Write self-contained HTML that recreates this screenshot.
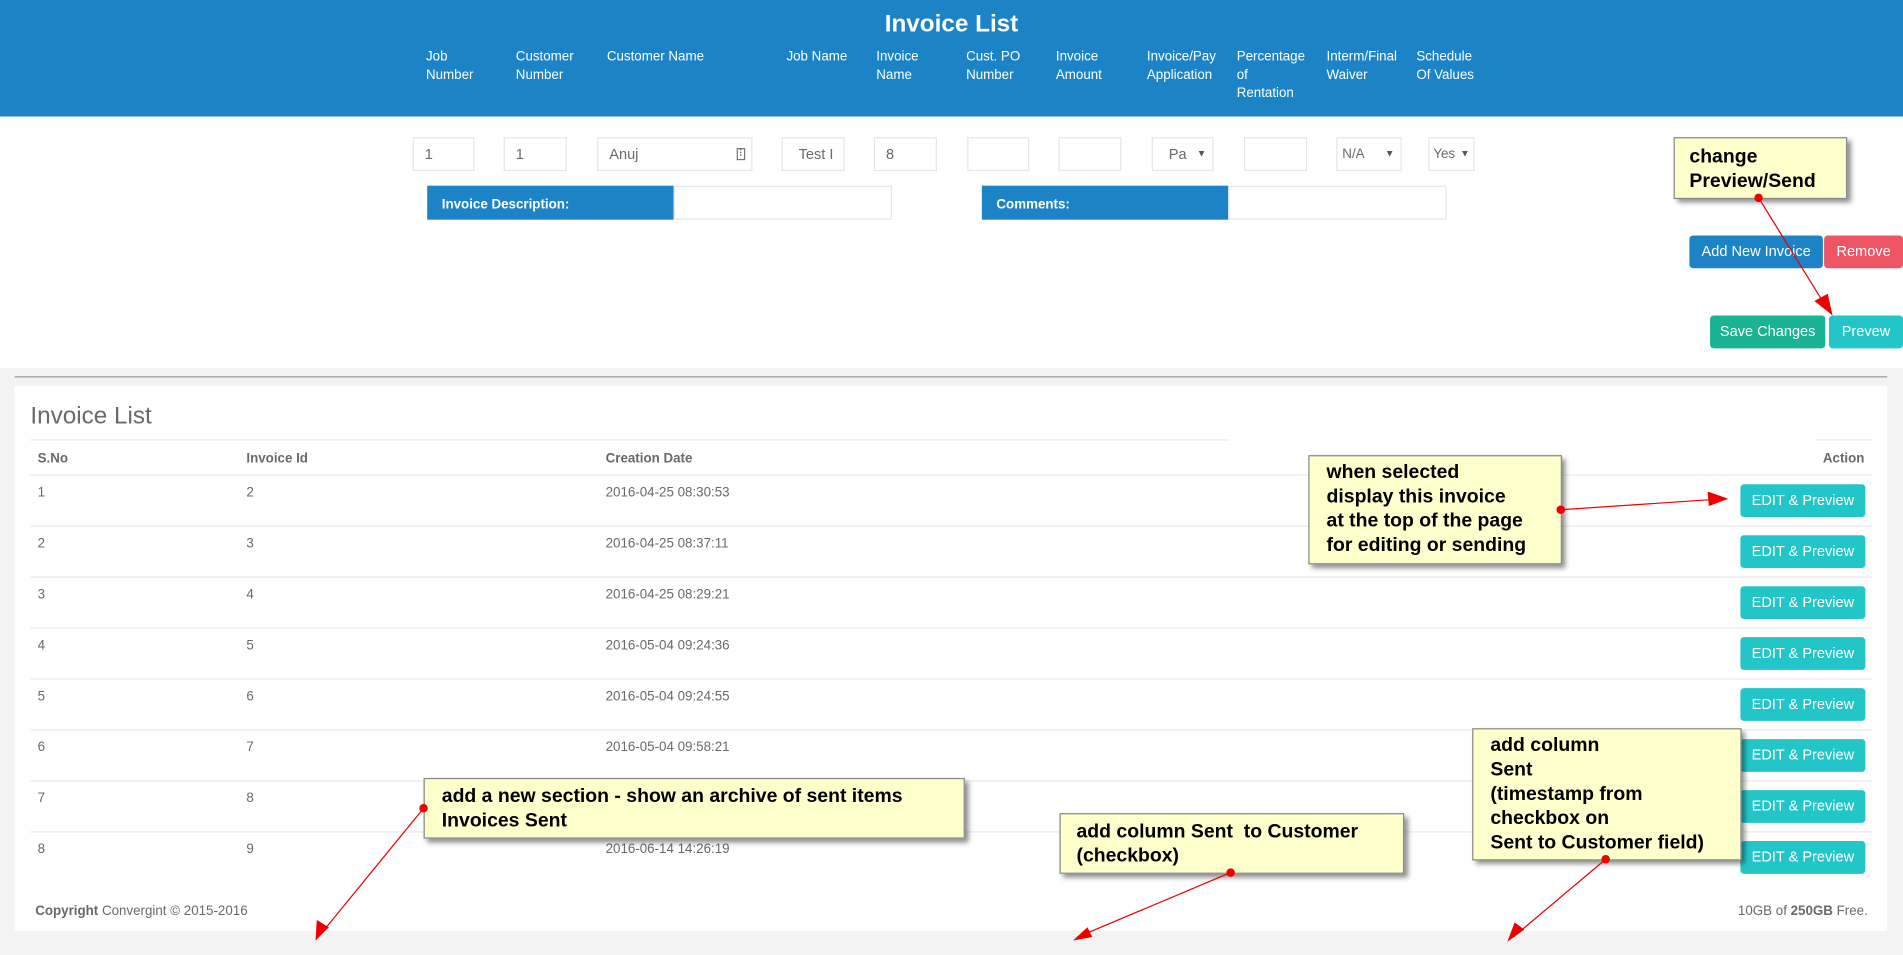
<!DOCTYPE html>
<html><head><meta charset="utf-8">
<style>
html,body{margin:0;padding:0;width:1903px;height:955px;overflow:hidden;background:#f3f3f3;}
#w{position:absolute;left:0;top:0;width:1568px;height:787px;transform:scale(1.21365);transform-origin:0 0;font-family:"Liberation Sans",Arial,sans-serif;color:#676a6c;background:#f3f3f3;}
.a{position:absolute;}
.hdr{left:0;top:0;width:1568px;height:96px;background:#1c84c6;}
.title{left:0;width:1568px;top:9px;text-align:center;color:#fff;font-weight:bold;font-size:20px;}
.col{color:#fff;font-size:11px;line-height:15px;top:40px;}
.top{left:0;top:96px;width:1568px;height:207px;background:#fff;}
.inp{border:1px solid #e5e6e7;background:#fff;font-size:12px;line-height:26px;box-sizing:border-box;padding-left:9px;color:#676a6c;top:113px;height:28px;}
.arr{position:absolute;right:5px;font-size:8px;color:#555;}
.bar{top:153px;height:28px;background:#1c84c6;color:#fff;font-weight:bold;font-size:11px;line-height:32px;padding-left:12px;box-sizing:border-box;}
.box{top:153px;height:28px;border:1px solid #e5e6e7;background:#fff;box-sizing:border-box;}
.btn{color:#fff;font-size:12px;text-align:center;line-height:27px;height:27px;border-radius:3px;}
.panel{left:12px;top:318px;width:1543px;height:449px;background:#fff;}
.th{font-size:11px;font-weight:bold;top:372px;}
.td{font-size:11px;}
.hr{height:1px;background:#e7eaec;}
.ed{left:1434px;width:103px;background:#23c6c8;}
.note{background:#ffffcc;border:1px solid #888;box-shadow:3px 3px 4px rgba(0,0,0,.45);color:#000;font-weight:bold;font-size:16px;line-height:20px;box-sizing:border-box;}
</style></head><body><div id="w">
<div class="a hdr"></div>
<div class="a title">Invoice List</div>
<div class="a col" style="left:351px">Job<br>Number</div>
<div class="a col" style="left:425px">Customer<br>Number</div>
<div class="a col" style="left:500px">Customer Name</div>
<div class="a col" style="left:648px">Job Name</div>
<div class="a col" style="left:722px">Invoice<br>Name</div>
<div class="a col" style="left:796px">Cust. PO<br>Number</div>
<div class="a col" style="left:870px">Invoice<br>Amount</div>
<div class="a col" style="left:945px">Invoice/Pay<br>Application</div>
<div class="a col" style="left:1019px">Percentage<br>of<br>Rentation</div>
<div class="a col" style="left:1093px">Interm/Final<br>Waiver</div>
<div class="a col" style="left:1167px">Schedule<br>Of Values</div>
<div class="a top"></div>
<div class="a inp" style="left:340px;width:51px">1</div>
<div class="a inp" style="left:415px;width:52px">1</div>
<div class="a inp" style="left:492px;width:128px">Anuj<span class="arr" style="font-size:10px;border:1px solid #777;line-height:8px;top:8px;padding:0 1px">⁝</span></div>
<div class="a inp" style="left:644px;width:52px;padding-left:13px">Test I</div>
<div class="a inp" style="left:720px;width:52px">8</div>
<div class="a inp" style="left:797px;width:51px"></div>
<div class="a inp" style="left:872px;width:52px"></div>
<div class="a inp" style="left:949px;width:51px;padding-left:13px">Pa<span class="arr">▼</span></div>
<div class="a inp" style="left:1025px;width:52px"></div>
<div class="a inp" style="left:1101px;width:54px;padding-left:4px;font-size:11px">N/A<span class="arr">▼</span></div>
<div class="a inp" style="left:1177px;width:38px;padding-left:3px;font-size:11px">Yes<span class="arr" style="right:3px">▼</span></div>
<div class="a bar" style="left:352px;width:203px">Invoice Description:</div>
<div class="a box" style="left:555px;width:180px"></div>
<div class="a bar" style="left:809px;width:204px">Comments:</div>
<div class="a box" style="left:1012px;width:180px"></div>
<div class="a btn" style="left:1392px;top:194px;width:110px;background:#1c84c6">Add New Invoice</div>
<div class="a btn" style="left:1503px;top:194px;width:65px;background:#ed5565">Remove</div>
<div class="a btn" style="left:1409px;top:260px;width:95px;background:#1ab394">Save Changes</div>
<div class="a btn" style="left:1507px;top:260px;width:61px;background:#23c6c8">Prevew</div>
<div class="a" style="left:12px;top:310px;width:1543px;height:1px;background:#999"></div>
<div class="a panel"></div>
<div class="a" style="left:25px;top:332px;font-size:20px;font-weight:300;color:#676a6c">Invoice List</div>
<div class="a hr" style="left:25px;top:362px;width:988px"></div>
<div class="a hr" style="left:1496px;top:362px;width:47px"></div>
<div class="a th" style="left:31px">S.No</div>
<div class="a th" style="left:203px">Invoice Id</div>
<div class="a th" style="left:499px">Creation Date</div>
<div class="a th" style="left:1502px">Action</div>
<div class="a hr" style="left:25px;top:391px;width:1518px"></div>
<div class="a hr" style="left:25px;top:433px;width:1518px"></div>
<div class="a hr" style="left:25px;top:475px;width:1518px"></div>
<div class="a hr" style="left:25px;top:517px;width:1518px"></div>
<div class="a hr" style="left:25px;top:559px;width:1518px"></div>
<div class="a hr" style="left:25px;top:601px;width:1518px"></div>
<div class="a hr" style="left:25px;top:643px;width:1518px"></div>
<div class="a hr" style="left:25px;top:685px;width:1518px"></div>

<div class="a td" style="left:31px;top:400px">1</div><div class="a td" style="left:203px;top:400px">2</div><div class="a td" style="left:499px;top:400px">2016-04-25 08:30:53</div>
<div class="a td" style="left:31px;top:442px">2</div><div class="a td" style="left:203px;top:442px">3</div><div class="a td" style="left:499px;top:442px">2016-04-25 08:37:11</div>
<div class="a td" style="left:31px;top:484px">3</div><div class="a td" style="left:203px;top:484px">4</div><div class="a td" style="left:499px;top:484px">2016-04-25 08:29:21</div>
<div class="a td" style="left:31px;top:526px">4</div><div class="a td" style="left:203px;top:526px">5</div><div class="a td" style="left:499px;top:526px">2016-05-04 09:24:36</div>
<div class="a td" style="left:31px;top:568px">5</div><div class="a td" style="left:203px;top:568px">6</div><div class="a td" style="left:499px;top:568px">2016-05-04 09:24:55</div>
<div class="a td" style="left:31px;top:610px">6</div><div class="a td" style="left:203px;top:610px">7</div><div class="a td" style="left:499px;top:610px">2016-05-04 09:58:21</div>
<div class="a td" style="left:31px;top:652px">7</div><div class="a td" style="left:203px;top:652px">8</div>
<div class="a td" style="left:31px;top:694px">8</div><div class="a td" style="left:203px;top:694px">9</div><div class="a td" style="left:499px;top:694px">2016-06-14 14:26:19</div>

<div class="a btn ed" style="top:399px">EDIT &amp; Preview</div>
<div class="a btn ed" style="top:441px">EDIT &amp; Preview</div>
<div class="a btn ed" style="top:483px">EDIT &amp; Preview</div>
<div class="a btn ed" style="top:525px">EDIT &amp; Preview</div>
<div class="a btn ed" style="top:567px">EDIT &amp; Preview</div>
<div class="a btn ed" style="top:609px">EDIT &amp; Preview</div>
<div class="a btn ed" style="top:651px">EDIT &amp; Preview</div>
<div class="a btn ed" style="top:693px">EDIT &amp; Preview</div>

<div class="a" style="left:29px;top:745px;font-size:11px"><b>Copyright</b> Convergint © 2015-2016</div>
<div class="a" style="right:29px;top:745px;font-size:11px;white-space:nowrap">10GB of <b>250GB</b> Free.</div>

<div class="a note" style="left:1379px;top:113px;width:143px;height:51px;padding:6px 0 0 12px">change<br>Preview/Send</div>
<div class="a note" style="left:1078px;top:375px;width:209px;height:90px;padding:4px 0 0 14px">when selected<br>display this invoice<br>at the top of the page<br>for editing or sending</div>
<div class="a note" style="left:349px;top:641px;width:446px;height:50px;padding:5px 0 0 14px">add a new section - show an archive of sent items<br>Invoices Sent</div>
<div class="a note" style="left:873px;top:670px;width:284px;height:50px;padding:5px 0 0 13px">add column Sent&nbsp; to Customer<br>(checkbox)</div>
<div class="a note" style="left:1213px;top:600px;width:222px;height:109px;padding:4px 0 0 14px">add column<br>Sent<br>(timestamp from<br>checkbox on<br>Sent to Customer field)</div>

<svg class="a" style="left:0;top:0" width="1568" height="787">
<g stroke="#e00" stroke-width="1" fill="none">
<line x1="1449" y1="163" x2="1506" y2="255"/>
<line x1="1286" y1="420" x2="1420" y2="411"/>
<line x1="349" y1="666" x2="264" y2="770"/>
<line x1="1014" y1="719" x2="888" y2="772"/>
<line x1="1323" y1="708" x2="1247" y2="772"/>
</g>
<g fill="#e00">
<circle cx="1449" cy="163" r="3.5"/><circle cx="1286" cy="420" r="3.5"/><circle cx="349" cy="666" r="3.5"/><circle cx="1014" cy="719" r="3.5"/><circle cx="1323" cy="708" r="3.5"/>
<polygon points="1510,260 1495,248 1506,242"/>
<polygon points="1424,411 1407,405 1408,417"/>
<polygon points="260,775 261,758 271,764"/>
<polygon points="884,775 896,764 900,772"/>
<polygon points="1242,776 1248,760 1256,766"/>
</g>
</svg>
</div></body></html>
